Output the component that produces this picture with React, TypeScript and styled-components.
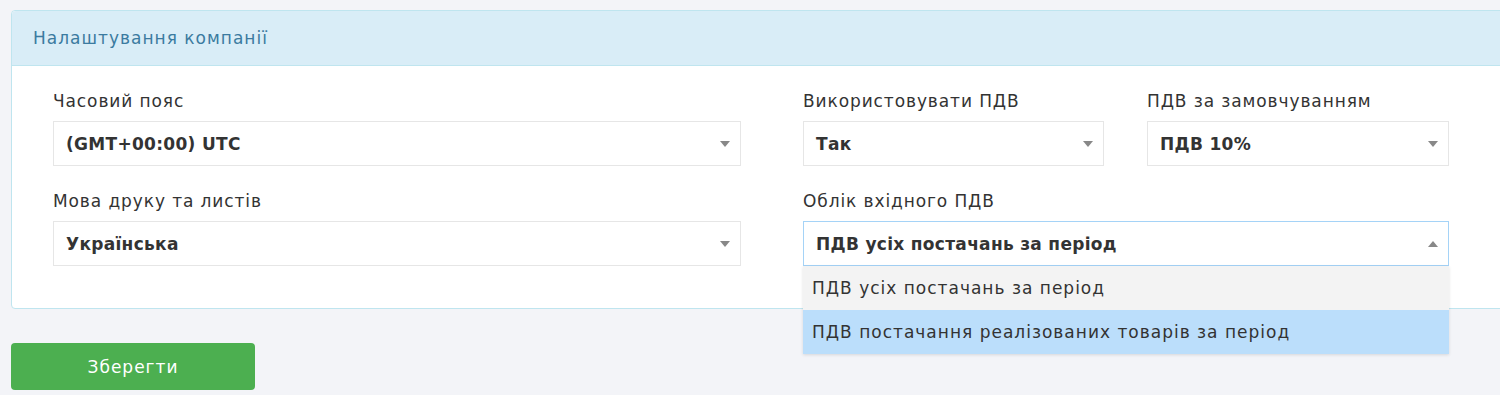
import { ReactElement } from "react";
import styled, { createGlobalStyle } from "styled-components";

const GlobalStyle = createGlobalStyle`
  html, body {
    margin: 0;
    padding: 0;
    background: #f3f4f8;
    overflow: hidden;
    font-family: "DejaVu Sans", "Open Sans", sans-serif;
  }
`;

type SelectProps = {
  value: string;
  open?: boolean;
  options?: string[];
  active?: number;
};

const SelectBox = ({ value, open, options, active }: SelectProps): ReactElement => {
  return (
    <SelectWrap>
      <Select $open={open}>
        <span>{value}</span>
        <Arrow $up={open} />
      </Select>
      {open && options && (
        <Menu>
          {options.map((o, i) => (
            <Option key={o} $active={i === active}>
              {o}
            </Option>
          ))}
        </Menu>
      )}
    </SelectWrap>
  );
};

export default function App(): ReactElement {
  return (
    <Page>
      <GlobalStyle />
      <Panel>
        <PanelHeader>Налаштування компанії</PanelHeader>
        <PanelBody>
          <LeftCol>
            <Field>
              <Label>Часовий пояс</Label>
              <SelectBox value="(GMT+00:00) UTC" />
            </Field>
            <Field>
              <Label>Мова друку та листів</Label>
              <SelectBox value="Українська" />
            </Field>
          </LeftCol>
          <RightCol>
            <Field>
              <Label>Використовувати ПДВ</Label>
              <SelectBox value="Так" />
            </Field>
            <Field>
              <Label>ПДВ за замовчуванням</Label>
              <SelectBox value="ПДВ 10%" />
            </Field>
            <WideField>
              <Label>Облік вхідного ПДВ</Label>
              <SelectBox
                value="ПДВ усіх постачань за період"
                open
                active={1}
                options={[
                  "ПДВ усіх постачань за період",
                  "ПДВ постачання реалізованих товарів за період",
                ]}
              />
            </WideField>
          </RightCol>
        </PanelBody>
      </Panel>
      <SaveButton>Зберегти</SaveButton>
    </Page>
  );
}

const Page = styled.div`
  padding: 10px 0 0 11px;
`;

const Panel = styled.div`
  margin-right: -20px;
  background: #fff;
  border: 1px solid #bfe5ef;
  border-radius: 4px;
`;

const PanelHeader = styled.div`
  height: 55px;
  box-sizing: border-box;
  padding: 0 21px;
  display: flex;
  align-items: center;
  background: #d9edf7;
  border-bottom: 1px solid #bfe5ef;
  border-radius: 4px 4px 0 0;
  color: #3b7ba0;
  font-size: 17px;
  letter-spacing: 1px;
`;

const PanelBody = styled.div`
  display: grid;
  grid-template-columns: 688px 646px;
  column-gap: 62px;
  padding: 25px 41px 42px;
`;

const LeftCol = styled.div`
  display: flex;
  flex-direction: column;
  gap: 25px;
`;

const RightCol = styled.div`
  display: grid;
  grid-template-columns: 301px 302px;
  column-gap: 43px;
  row-gap: 25px;
`;

const Field = styled.div`
  display: flex;
  flex-direction: column;
  gap: 10px;
`;

const WideField = styled(Field)`
  grid-column: span 2;
`;

const Label = styled.div`
  font-size: 17px;
  line-height: 20px;
  letter-spacing: 0.9px;
  color: #333;
`;

const SelectWrap = styled.div`
  position: relative;
`;

const Select = styled.div<{ $open?: boolean }>`
  height: 45px;
  box-sizing: border-box;
  display: flex;
  align-items: center;
  justify-content: space-between;
  padding: 0 10px 0 12px;
  border: 1px solid ${(p) => (p.$open ? "#a5d3f7" : "#e6e6e6")};
  background: #fff;
  font-size: 17px;
  font-weight: bold;
  letter-spacing: 0.3px;
  color: #333;
`;

const Arrow = styled.i<{ $up?: boolean }>`
  width: 0;
  height: 0;
  border-left: 5px solid transparent;
  border-right: 5px solid transparent;
  ${(p) =>
    p.$up ? "border-bottom: 6px solid #888;" : "border-top: 6px solid #888;"}
`;

const Menu = styled.div`
  position: absolute;
  top: 100%;
  left: 0;
  right: 0;
  z-index: 2;
  box-shadow: 0 1px 3px rgba(0, 0, 0, 0.12);
`;

const Option = styled.div<{ $active?: boolean }>`
  height: 44px;
  display: flex;
  align-items: center;
  padding-left: 9px;
  font-size: 17px;
  letter-spacing: 1px;
  color: #333;
  background: ${(p) => (p.$active ? "#bbdefb" : "#f3f3f3")};
`;

const SaveButton = styled.button`
  margin-top: 34px;
  width: 244px;
  height: 47px;
  border: none;
  border-radius: 4px;
  background: #4caf50;
  color: #fff;
  font-family: inherit;
  font-size: 17px;
  letter-spacing: 1px;
`;
